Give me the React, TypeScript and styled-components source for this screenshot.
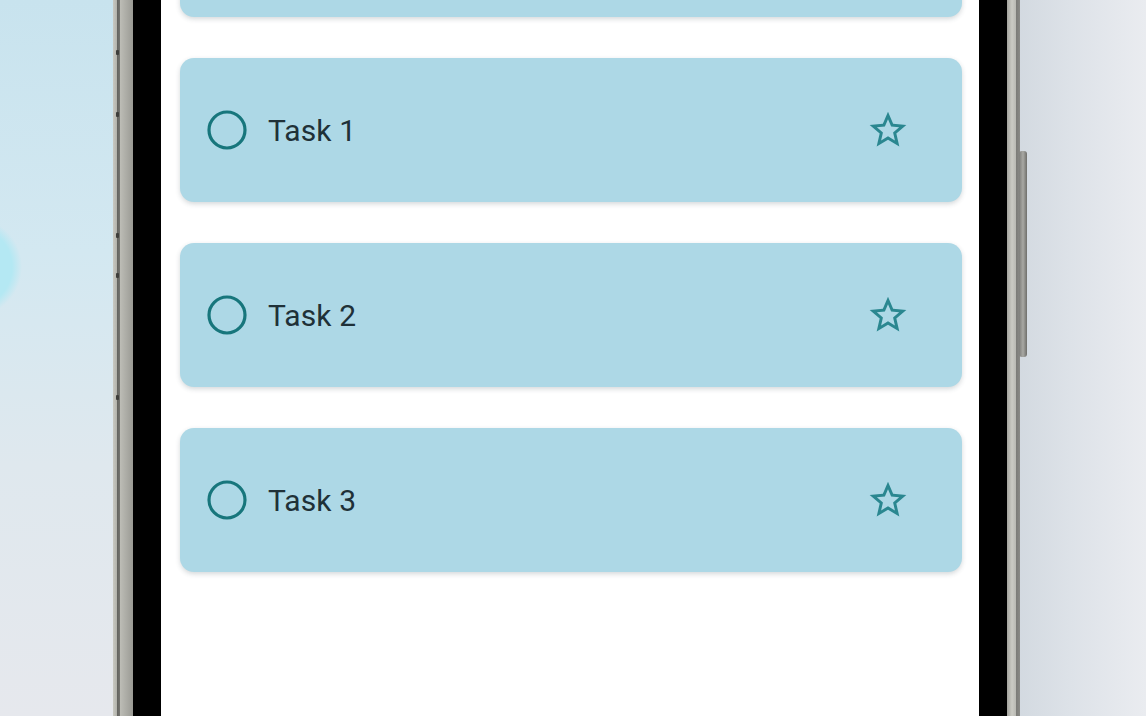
import React from "react";
import styled, { createGlobalStyle } from "styled-components";

const GlobalStyle = createGlobalStyle`
  html, body {
    margin: 0;
    padding: 0;
    height: 100%;
    overflow: hidden;
  }
  body {
    font-family: Roboto, "Noto Sans", sans-serif;
    background:
      radial-gradient(circle at -28px 267px, #b4e8f3 0, #b4e8f3 40px, rgba(180, 232, 243, 0) 50px),
      linear-gradient(90deg, rgba(0,0,0,0) 0, rgba(0,0,0,0) 1010px, #d1d8df 1010px, #dde2e8 1070px, #eaecf0 100%),
      linear-gradient(180deg, #c8e3ee 0%, #d3e8f1 35%, #dfe8ee 65%, #e6e8ed 100%);
  }
`;

const Stage = styled.div`
  width: 1146px;
  height: 716px;
  overflow: hidden;
  display: flex;
  justify-content: flex-start;
  padding-left: 113px;
  box-sizing: border-box;
`;

const PhoneFrame = styled.div`
  position: relative;
  width: 907px;
  margin-top: -199px;
  padding: 20px 13px 0 20px;
  box-sizing: border-box;
  border-radius: 60px 60px 0 0;
  background: linear-gradient(
    90deg,
    #c9c9c2 0,
    #b2b2ab 4px,
    #62625e 4px,
    #74746f 7px,
    #bdbdb6 7px,
    #9a9a94 20px,
    #000 20px,
    #000 calc(100% - 13px),
    #a3a39d calc(100% - 13px),
    #cbcbc4 calc(100% - 8px),
    #b9b9b3 calc(100% - 4px),
    #7b7b77 calc(100% - 4px),
    #8a8a86 100%
  );
`;

const Bezel = styled.div`
  background: #000;
  padding: 28px 28px 0 28px;
  border-radius: 44px 44px 0 0;
`;

const Screen = styled.div`
  background: #fff;
  min-height: 1100px;
  padding: 24px 17px 0 19px;
  border-radius: 20px 20px 0 0;
`;

const TaskList = styled.ul`
  list-style: none;
  margin: 0;
  padding: 0;
  display: flex;
  flex-direction: column;
  gap: 41px;
`;

const TaskCard = styled.li`
  height: 144px;
  display: flex;
  align-items: center;
  padding: 0 51px 0 27px;
  background: #add8e6;
  border-radius: 14px;
  box-shadow: 0 2px 5px rgba(40, 60, 70, 0.2);
`;

const TaskLabel = styled.span`
  flex: 1;
  margin-left: 21px;
  font-size: 30px;
  font-weight: 400;
  color: #1f3138;
  letter-spacing: 0.1px;
`;

const IconButton = styled.button`
  border: 0;
  padding: 0;
  background: none;
  display: flex;
  align-items: center;
  justify-content: center;
  width: 46px;
  height: 46px;
`;

const SideButton = styled.div`
  position: absolute;
  right: -7px;
  top: 350px;
  width: 8px;
  height: 206px;
  border-radius: 3px;
  background: linear-gradient(90deg, #7d7d79, #a9a9a4 50%, #6f6f6b);
`;

const EdgeMark = styled.div<{ $top: number }>`
  position: absolute;
  left: 3px;
  top: ${(p) => p.$top}px;
  width: 3px;
  height: 5px;
  background: #3e3e3b;
  border-radius: 1px;
`;

function CircleIcon() {
  return (
    <svg width="40" height="40" viewBox="0 0 40 40">
      <circle cx="20" cy="20" r="18" fill="none" stroke="#17767c" strokeWidth="3.2" />
    </svg>
  );
}

function StarIcon() {
  return (
    <svg width="44" height="44" viewBox="0 0 24 24">
      <path
        fill="#2a8790"
        d="M22 9.24l-7.19-.62L12 2 9.19 8.63 2 9.24l5.46 4.73L5.82 21 12 17.27 18.18 21l-1.63-7.03L22 9.24zM12 15.4l-3.76 2.27 1-4.28-3.32-2.88 4.38-.38L12 6.1l1.71 4.04 4.38.38-3.32 2.88 1 4.28L12 15.4z"
      />
    </svg>
  );
}

// first task is scrolled off the top; only its lower edge shows
const tasks = ["", "Task 1", "Task 2", "Task 3"];
const marks = [50, 112, 233, 273, 395];

export default function App() {
  return (
    <>
      <GlobalStyle />
      <Stage>
        <PhoneFrame>
          {marks.map((m) => (
            <EdgeMark key={m} $top={m + 199} />
          ))}
          <SideButton />
          <Bezel>
            <Screen>
              <TaskList>
                {tasks.map((t, i) => (
                  <TaskCard key={i}>
                    <CircleIcon />
                    <TaskLabel>{t}</TaskLabel>
                    <IconButton aria-label="favorite">
                      <StarIcon />
                    </IconButton>
                  </TaskCard>
                ))}
              </TaskList>
            </Screen>
          </Bezel>
        </PhoneFrame>
      </Stage>
    </>
  );
}
